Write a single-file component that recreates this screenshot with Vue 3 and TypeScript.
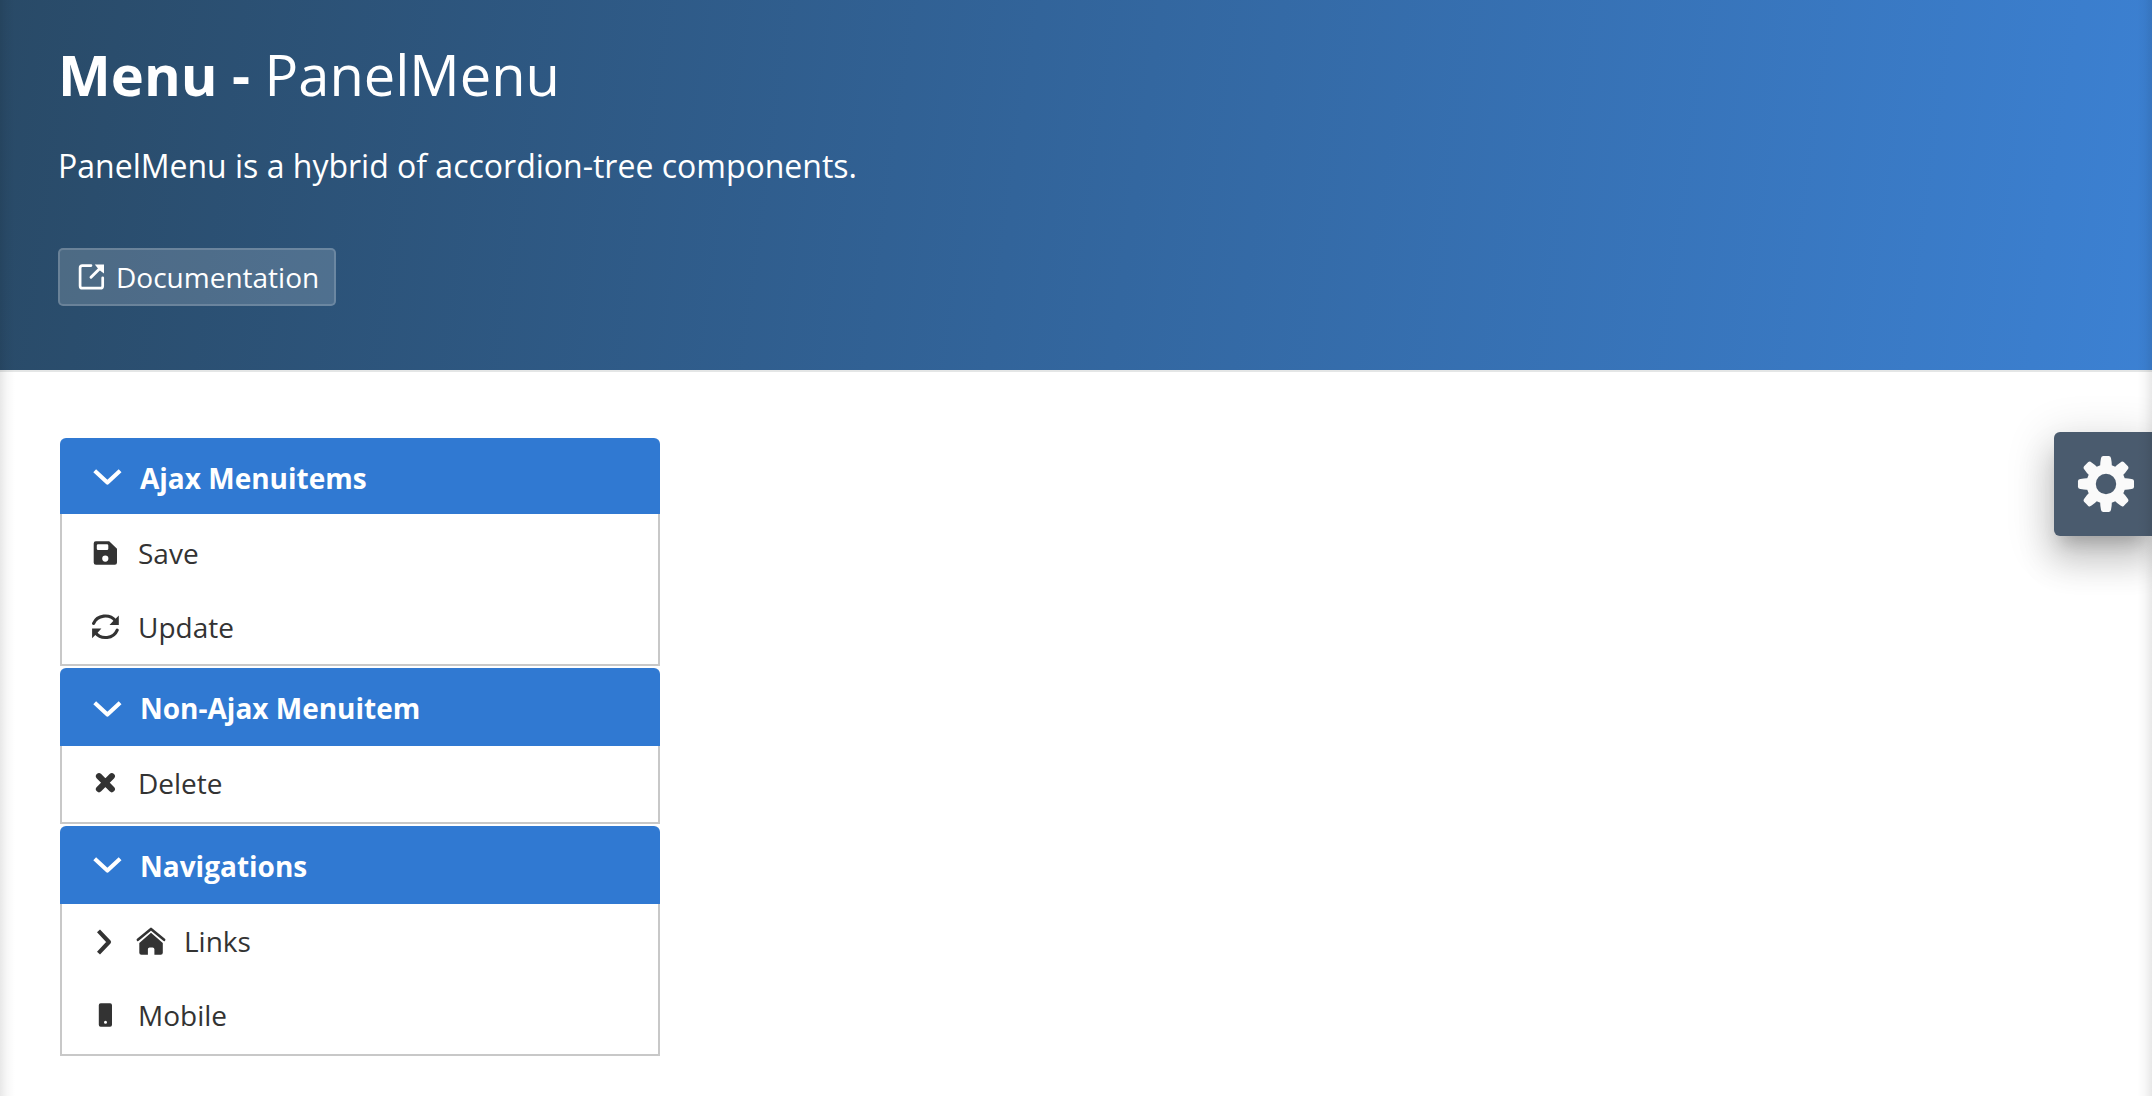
<script setup lang="ts">
type IconName = 'save' | 'refresh' | 'times' | 'home' | 'mobile'

interface MenuItem {
  label: string
  icon: IconName
  submenu?: boolean
}

interface Panel {
  title: string
  key: string
  items: MenuItem[]
}

const panels: Panel[] = [
  {
    title: 'Ajax Menuitems',
    key: 'ajax',
    items: [
      { label: 'Save', icon: 'save' },
      { label: 'Update', icon: 'refresh' },
    ],
  },
  {
    title: 'Non-Ajax Menuitem',
    key: 'nonajax',
    items: [{ label: 'Delete', icon: 'times' }],
  },
  {
    title: 'Navigations',
    key: 'nav',
    items: [
      { label: 'Links', icon: 'home', submenu: true },
      { label: 'Mobile', icon: 'mobile' },
    ],
  },
]

// Eight-toothed gear outline centred on (29, 29)
function gearPath(): string {
  const pt = (r: number, deg: number): string => {
    const a = (deg * Math.PI) / 180
    return `${(29 + r * Math.sin(a)).toFixed(2)} ${(29 - r * Math.cos(a)).toFixed(2)}`
  }
  const parts: string[] = []
  for (let i = 0; i < 8; i++) {
    const c = i * 45
    parts.push(`${i === 0 ? 'M' : 'L'}${pt(19.6, c - 17)}`)
    parts.push(`Q${pt(21.6, c - 16)} ${pt(26, c - 11.2)}`)
    parts.push(`Q${pt(28.2, c - 10)} ${pt(28.2, c - 6)}`)
    parts.push(`Q${pt(28, c)} ${pt(28.2, c + 6)}`)
    parts.push(`Q${pt(28.2, c + 10)} ${pt(26, c + 11.2)}`)
    parts.push(`Q${pt(21.6, c + 16)} ${pt(19.6, c + 17)}`)
  }
  return parts.join(' ') + ' Z M39.2 29 A10.2 10.2 0 1 0 18.8 29 A10.2 10.2 0 1 0 39.2 29 Z'
}

const gear = gearPath()
</script>

<template>
  <div class="page">
    <header class="intro">
      <h1>Menu - <span>PanelMenu</span></h1>
      <p>PanelMenu is a hybrid of accordion-tree components.</p>
      <a class="doc">
        <svg width="28" height="28" viewBox="0 0 28 28" fill="none">
          <path d="M13 2.6H4.4Q2.1 2.6 2.1 4.9V22.9Q2.1 25.2 4.4 25.2H22.4Q24.7 25.2 24.7 22.9V14.8" stroke="#fff" stroke-width="2.7" stroke-linecap="round" />
          <path d="M13 14.3L22.6 4.7" stroke="#fff" stroke-width="2.9" stroke-linecap="round" />
          <path d="M16.8 1.4H26V10.6L22.6 8L19.4 4.8Z" fill="#fff" />
        </svg>
        <span>Documentation</span>
      </a>
    </header>

    <main class="content">
      <div class="panelmenu">
        <section v-for="panel in panels" :key="panel.key" class="panel" :class="panel.key">
          <h3>
            <svg class="chevron" width="30" height="20" viewBox="0 0 30 20" fill="none">
              <path d="M2.7 2.8L15.4 14.6L28.1 2.8" stroke="#fff" stroke-width="4.1" stroke-linejoin="round" />
            </svg>
            <span>{{ panel.title }}</span>
          </h3>
          <ul>
            <li v-for="item in panel.items" :key="item.label">
              <svg v-if="item.submenu" class="arrow" width="28" height="28" viewBox="0 0 28 28" fill="none">
                <path d="M8.5 2.8L19 14L8.5 25.2" stroke="#333" stroke-width="4.1" stroke-linejoin="round" />
              </svg>
              <svg v-if="item.icon === 'save'" class="icon" width="28" height="28" viewBox="0.6 0 28 28">
                <path fill="#333" fill-rule="evenodd" d="M4.4 2.3H17.8L25.6 9.8V23.6Q25.6 25.8 23.4 25.8H4.6Q2.3 25.8 2.3 23.6V4.5Q2.3 2.3 4.4 2.3ZM6.7 5.2Q5.4 5.2 5.4 6.5V9.8Q5.4 11.1 6.7 11.1H15.6Q16.9 11.1 16.9 9.8V6.5Q16.9 5.2 15.6 5.2ZM17 19.6A3.1 3.1 0 1 0 10.8 19.6A3.1 3.1 0 1 0 17 19.6Z" />
              </svg>
              <svg v-else-if="item.icon === 'refresh'" class="icon" width="28" height="28" viewBox="0.6 0 28 28">
                <path d="M2.2 10.4A12.5 11.5 0 0 1 24 7.8M25.8 17.1A12.5 11.5 0 0 1 4 19.8" fill="none" stroke="#333" stroke-width="3.1" stroke-linecap="round" />
                <path d="M27.4 2.6V12H18.1L21.6 8.2ZM.7 25.2V15.4H10L6.4 19.6Z" fill="#333" />
              </svg>
              <svg v-else-if="item.icon === 'times'" class="icon" width="28" height="28" viewBox="0.6 0.3 28 28">
                <path d="M7.6 7.5L20.4 20.4M20.4 7.5L7.6 20.4" stroke="#333" stroke-width="6.2" stroke-linecap="round" />
              </svg>
              <svg v-else-if="item.icon === 'home'" class="icon home" width="30" height="30" viewBox="0 0 30 30">
                <path d="M1.9 13.8L15 2.9L28.1 13.8" fill="none" stroke="#333" stroke-width="2.6" stroke-linecap="round" stroke-linejoin="round" />
                <path fill="#333" d="M15 6.8L26.8 17V26.7Q26.8 28.8 24.7 28.8H18.4V23.2Q18.4 21.4 16.6 21.4H13.7Q11.9 21.4 11.9 23.2V28.8H5.4Q3.3 28.8 3.3 26.7V17Z" />
              </svg>
              <svg v-else class="icon" width="28" height="28" viewBox="0.6 0 28 28">
                <path fill="#333" fill-rule="evenodd" d="M9.3 2.3H18.7Q20.6 2.3 20.6 4.2V23.8Q20.6 25.7 18.7 25.7H9.3Q7.4 25.7 7.4 23.8V4.2Q7.4 2.3 9.3 2.3ZM15.6 21.3A1.5 1.5 0 1 0 12.6 21.3A1.5 1.5 0 1 0 15.6 21.3Z" />
              </svg>
              <span>{{ item.label }}</span>
            </li>
          </ul>
        </section>
      </div>
    </main>

    <button class="config" type="button" aria-label="Settings">
      <svg width="58" height="58" viewBox="0 0 58 58">
        <path :d="gear" fill="#fafafa" fill-rule="evenodd" />
      </svg>
    </button>
    <div class="edges"></div>
  </div>
</template>

<style>
body {
  margin: 0;
}
</style>

<style scoped>
.page {
  position: relative;
  width: 100%;
  height: 1096px;
  overflow: hidden;
  background: #fff;
  color: #333;
  font-family: "Open Sans", sans-serif;
  font-size: 28px;
}

.intro {
  box-sizing: border-box;
  height: 372px;
  padding: 36px 58px 0;
  border-bottom: 2px solid #e4e6e6;
  background: linear-gradient(98deg, #294a67, #3c81d3) padding-box;
  color: #fff;
}

h1 {
  margin: 0;
  font-size: 56px;
  font-weight: 700;
  line-height: 76px;
}

h1 span {
  font-weight: 400;
}

.intro p {
  margin: 30px 0 0;
  font-size: 32px;
  line-height: 48px;
}

.doc {
  display: flex;
  align-items: center;
  box-sizing: border-box;
  width: 278px;
  height: 58px;
  margin-top: 58px;
  padding-left: 18px;
  border: 2px solid rgba(255, 255, 255, 0.16);
  border-radius: 5px;
  background: rgba(255, 255, 255, 0.17);
  line-height: 54px;
}

.doc span {
  margin-left: 10px;
}

.content {
  padding: 66px 60px 0;
}

.panelmenu {
  display: flex;
  flex-direction: column;
  gap: 2px;
  width: 600px;
}

h3 {
  display: flex;
  box-sizing: border-box;
  height: 78px;
  margin: 0;
  padding: 3px 0 0 32px;
  border-radius: 6px 6px 0 0;
  background: #3079d2;
  color: #fff;
  font-size: 28px;
  font-weight: 700;
  line-height: 74px;
}

.ajax h3 {
  height: 76px;
}

.chevron {
  flex: none;
  margin: 27px 18px 0 0;
}

.nonajax .chevron {
  margin-top: 29px;
}

.nav .chevron {
  margin-top: 27px;
}

ul {
  margin: 0;
  padding: 0 0 2px;
  border: solid #c8c8c8;
  border-width: 0 2px 2px;
  list-style: none;
}

.ajax ul {
  padding: 2px 0 0;
}

li {
  display: flex;
  height: 74px;
  padding-left: 30px;
  line-height: 74px;
}

.icon {
  flex: none;
  margin: 23px 18px 0 0;
}

.arrow {
  flex: none;
  margin: 24px 16px 0 -2px;
}

.home {
  margin: 22px 18px 0 2px;
}

.config {
  position: absolute;
  top: 432px;
  right: 0;
  width: 98px;
  height: 104px;
  padding: 0 0 0 23px;
  border: 0;
  border-radius: 6px 0 0 6px;
  background: #4a5b6e;
  box-shadow:
    0 14px 16px -8px rgba(0, 0, 0, 0.2),
    0 10px 44px 8px rgba(0, 0, 0, 0.12),
    0 24px 34px 4px rgba(0, 0, 0, 0.14);
  text-align: left;
}

.config svg {
  display: block;
}

.edges {
  position: absolute;
  inset: 0;
  background:
    linear-gradient(90deg, rgba(0, 0, 0, 0.09), rgba(0, 0, 0, 0.03) 7px, transparent 15px),
    linear-gradient(270deg, rgba(0, 0, 0, 0.09), rgba(0, 0, 0, 0.03) 7px, transparent 15px);
  pointer-events: none;
}
</style>
